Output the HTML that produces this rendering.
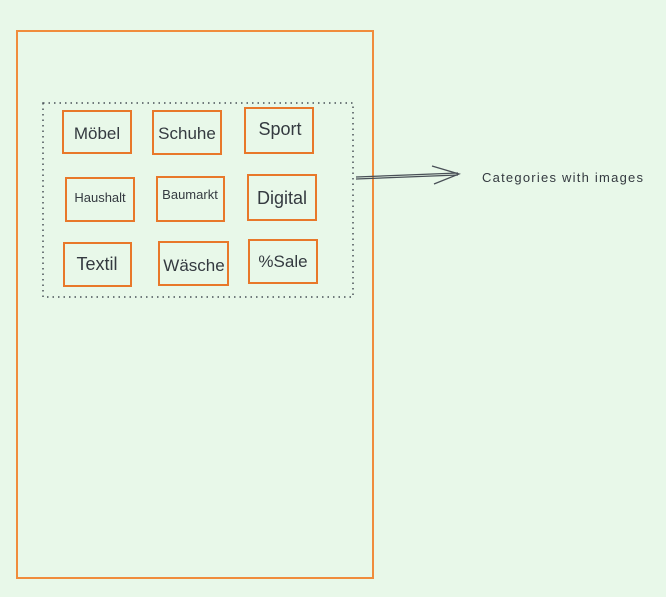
<!DOCTYPE html>
<html><head><meta charset="utf-8"><style>
html,body{margin:0;padding:0;background:#e8f8e9;}
svg{display:block}
text{font-family:"Liberation Sans",sans-serif;fill:#343a40;}
</style></head><body>
<svg width="666" height="597" viewBox="0 0 666 597" xmlns="http://www.w3.org/2000/svg">
<rect x="0" y="0" width="666" height="597" fill="#e8f8e9"/>
<rect x="17" y="31" width="356" height="547" fill="none" stroke="#f08c3c" stroke-width="2"/>
<rect x="43" y="103" width="310" height="194" fill="none" stroke="#495057" stroke-width="1.5" stroke-dasharray="1.5 4"/>
<g fill="none" stroke="#e8782a" stroke-width="2">
<rect x="63" y="111" width="68" height="42"/>
<rect x="153" y="111" width="68" height="43"/>
<rect x="245" y="108" width="68" height="45"/>
<rect x="66" y="178" width="68" height="43"/>
<rect x="157" y="177" width="67" height="44"/>
<rect x="248" y="175" width="68" height="45"/>
<rect x="64" y="243" width="67" height="43"/>
<rect x="159" y="242" width="69" height="43"/>
<rect x="249" y="240" width="68" height="43"/>
</g>
<g text-anchor="middle">
<text x="97" y="139" font-size="17">Möbel</text>
<text x="187" y="139" font-size="17">Schuhe</text>
<text x="280" y="135" font-size="18">Sport</text>
<text x="100" y="202" font-size="13">Haushalt</text>
<text x="190" y="199" font-size="13">Baumarkt</text>
<text x="282" y="204" font-size="18">Digital</text>
<text x="97" y="270" font-size="18">Textil</text>
<text x="194" y="271" font-size="17">Wäsche</text>
<text x="283" y="267" font-size="17">%Sale</text>
</g>
<g stroke="#495057" stroke-width="1.3" fill="none">
<line x1="356" y1="177" x2="458" y2="173"/>
<line x1="356" y1="179" x2="458" y2="175"/>
<polyline points="432,166 459,174 434,184"/>
</g>
<text x="482" y="182" font-size="13" textLength="161" lengthAdjust="spacing">Categories with images</text>
</svg>
</body></html>
